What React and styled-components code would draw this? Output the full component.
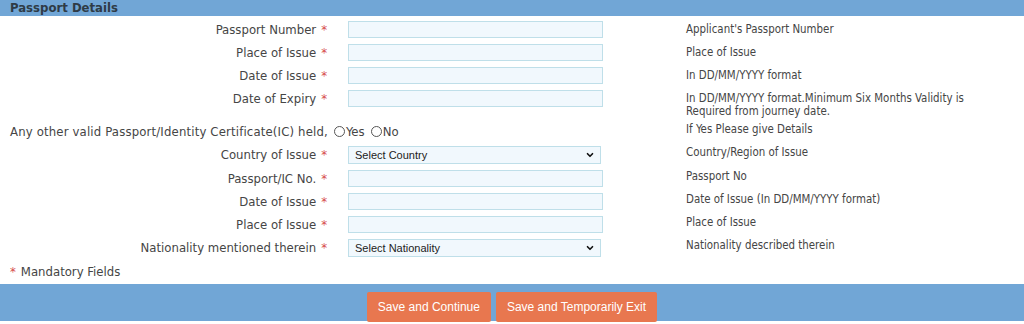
import React from "react";
import styled, { createGlobalStyle } from "styled-components";
import { ChevronDown } from "lucide-react";

const GlobalStyle = createGlobalStyle`
  body {
    margin: 0;
    background: #fff;
    font-family: "DejaVu Sans Condensed", "DejaVu Sans", sans-serif;
  }
`;

const Page = styled.div`
  width: 1024px;
  height: 324px;
  overflow: hidden;
`;

const SectionHead = styled.div`
  height: 16px;
  line-height: 16px;
  background: #71a6d6;
  color: #2f3b46;
  font-weight: bold;
  font-size: 13px;
  padding-left: 10px;
`;

const Form = styled.div`
  display: grid;
  grid-template-columns: 337px 349px 1fr;
  padding-top: 2px;
`;

const Label = styled.div`
  grid-column: ${(p) => (p.$wide ? "1 / span 2" : "auto")};
  padding: ${(p) => (p.$wide ? "3px 0 3px 10px" : "3px 10px 3px 0")};
  font-size: 13px;
  line-height: 17px;
  letter-spacing: ${(p) => (p.$wide ? "0.16px" : "0")};
  color: #454545;
  white-space: nowrap;
  display: flex;
  justify-content: ${(p) => (p.$wide ? "flex-start" : "flex-end")};
  align-items: center;
  height: 17px;
`;

const Star = styled.span`
  color: #d64b4b;
  margin-left: 5px;
`;

const Field = styled.div`
  padding: 3px 0 3px 11px;
`;

const Input = styled.input`
  box-sizing: border-box;
  display: block;
  width: 255px;
  height: 17px;
  margin: 0;
  background: #f1f8fd;
  border: 1px solid #bfdfe9;
  outline: none;
`;

const SelectBox = styled.div`
  position: relative;
  box-sizing: border-box;
  width: 253px;
  height: 18px;
  background: #f1f8fd;
  border: 1px solid #bfdfe9;
  font-family: "Liberation Sans", Arial, sans-serif;
  font-size: 11px;
  line-height: 16px;
  color: #222;
  padding-left: 6px;
`;

const Chevron = styled.span`
  position: absolute;
  right: 5px;
  top: 3px;
  display: flex;
  color: #111;
`;

const Help = styled.div`
  padding: ${(p) => (p.$shift ? "3px 0 2px" : "5px 0 2px")};
  font-size: 11.4px;
  line-height: 13px;
  color: #454545;
  width: 310px;
`;

const Radios = styled.span`
  display: inline-flex;
  align-items: center;
  margin-left: 6px;
  gap: 6px;
  letter-spacing: 0;
`;

const RadioOpt = styled.span`
  display: inline-flex;
  align-items: center;
  gap: 1px;
`;

const Circle = styled.span`
  width: 11px;
  height: 11px;
  border: 1px solid #555;
  border-radius: 50%;
  box-sizing: border-box;
  display: inline-block;
`;

const Note = styled.div`
  padding: 3px 0 3px 10px;
  font-size: 13px;
  line-height: 17px;
  color: #454545;
  & > span {
    color: #d64b4b;
    margin-right: 5px;
  }
`;

const Footer = styled.div`
  height: 37px;
  background: #71a6d6;
  display: flex;
  justify-content: center;
  align-items: flex-start;
  gap: 5px;
  padding-top: 8px;
  box-sizing: border-box;
  margin-top: 1px;
`;

const Button = styled.button`
  flex-shrink: 0;
  height: 30px;
  padding: 0 11px;
  background: #e8774f;
  border: none;
  border-radius: 2px;
  color: #fff;
  font-family: "Liberation Sans", Arial, sans-serif;
  font-size: 12px;
  cursor: pointer;
`;

const first = [
  ["Passport Number", "Applicant's Passport Number"],
  ["Place of Issue", "Place of Issue"],
  ["Date of Issue", "In DD/MM/YYYY format"],
  ["Date of Expiry", "In DD/MM/YYYY format.Minimum Six Months Validity is Required from journey date."],
];

const second = [
  ["Country of Issue", "Country/Region of Issue", "Select Country"],
  ["Passport/IC No.", "Passport No"],
  ["Date of Issue", "Date of Issue (In DD/MM/YYYY format)"],
  ["Place of Issue", "Place of Issue"],
  ["Nationality mentioned therein", "Nationality described therein", "Select Nationality"],
];

const Row = ({ label, help, select, shift }) => (
  <>
    <Label>
      {label}
      <Star>*</Star>
    </Label>
    <Field>
      {select ? (
        <SelectBox>
          {select}
          <Chevron>
            <ChevronDown size={10} strokeWidth={4} />
          </Chevron>
        </SelectBox>
      ) : (
        <Input />
      )}
    </Field>
    <Help $shift={shift}>{help}</Help>
  </>
);

export default function App() {
  return (
    <Page>
      <GlobalStyle />
      <SectionHead>Passport Details</SectionHead>
      <Form>
        {first.map(([l, h]) => (
          <Row key={l} label={l} help={h} />
        ))}
        <Label $wide>
          Any other valid Passport/Identity Certificate(IC) held,
          <Radios>
            <RadioOpt>
              <Circle />
              Yes
            </RadioOpt>
            <RadioOpt>
              <Circle />
              No
            </RadioOpt>
          </Radios>
        </Label>
        <Help $shift>If Yes Please give Details</Help>
        {second.map(([l, h, s]) => (
          <Row key={l + h} label={l} help={h} select={s} shift />
        ))}
      </Form>
      <Note>
        <span>*</span>Mandatory Fields
      </Note>
      <Footer>
        <Button>Save and Continue</Button>
        <Button>Save and Temporarily Exit</Button>
      </Footer>
    </Page>
  );
}
